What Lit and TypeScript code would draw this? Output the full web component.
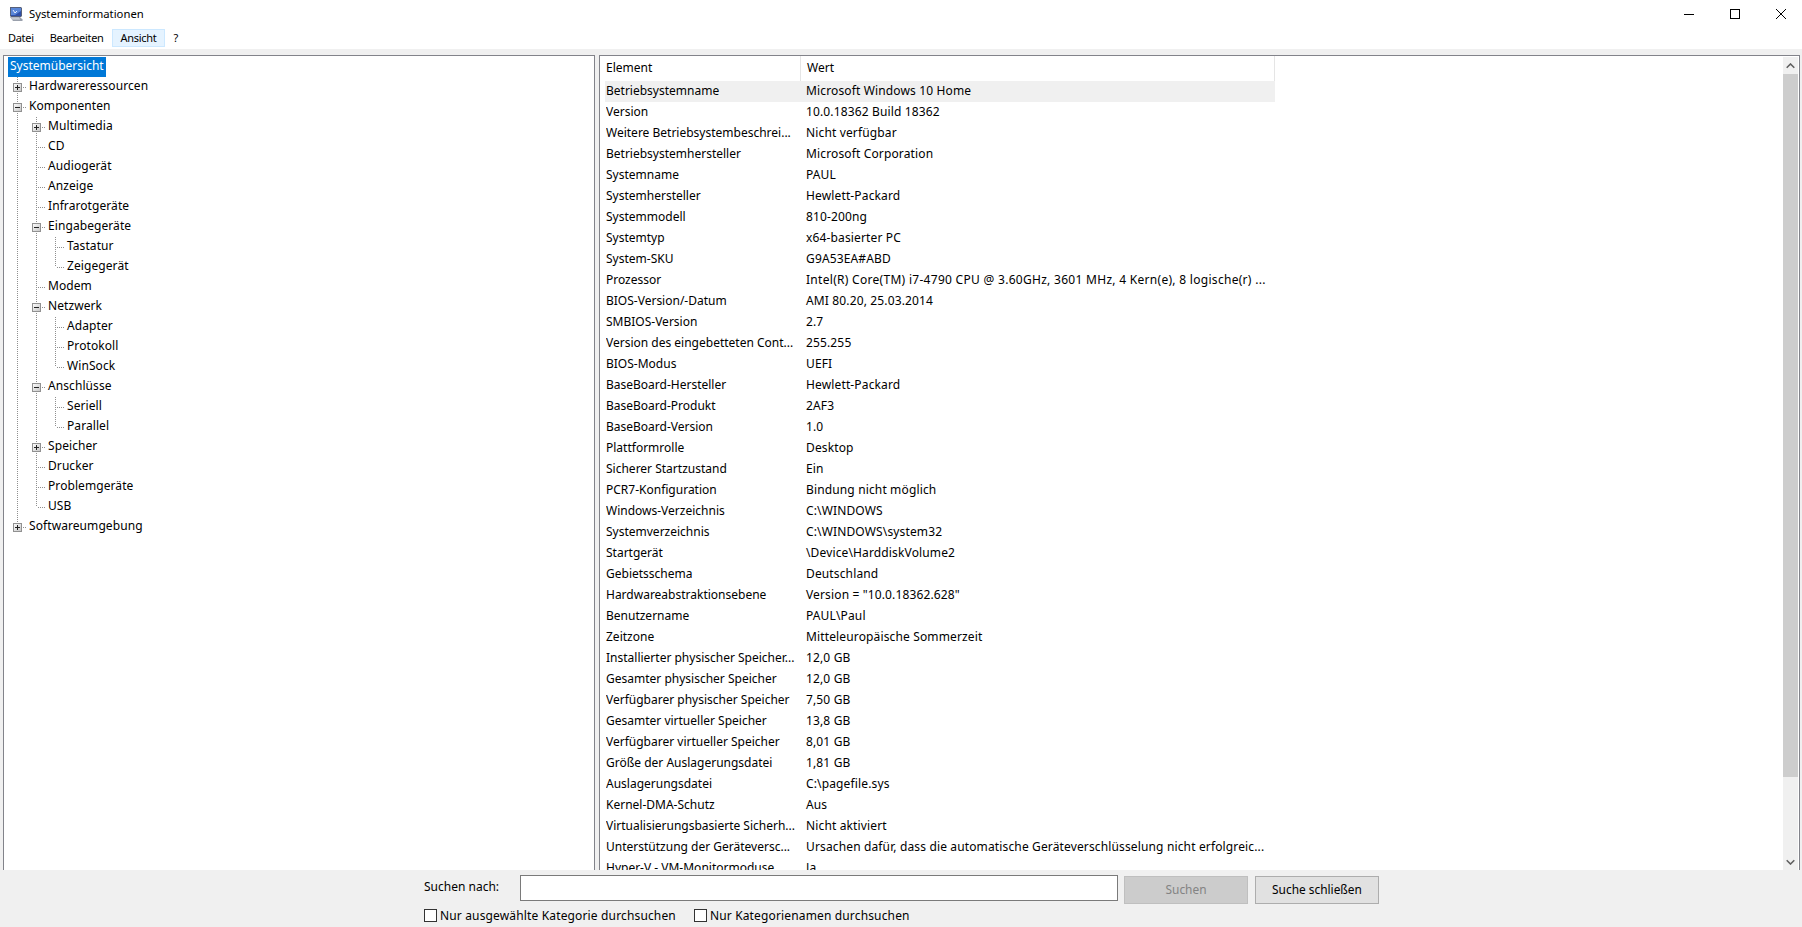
import { LitElement, html, css, svg } from "lit";
import { customElement } from "lit/decorators.js";

type T = [number, string, string];
const TREE: T[] = [
  [0, "", "Systemübersicht"],
  [0, "+", "Hardwareressourcen"],
  [0, "-", "Komponenten"],
  [1, "+", "Multimedia"],
  [1, "", "CD"],
  [1, "", "Audiogerät"],
  [1, "", "Anzeige"],
  [1, "", "Infrarotgeräte"],
  [1, "-", "Eingabegeräte"],
  [2, "", "Tastatur"],
  [2, "", "Zeigegerät"],
  [1, "", "Modem"],
  [1, "-", "Netzwerk"],
  [2, "", "Adapter"],
  [2, "", "Protokoll"],
  [2, "", "WinSock"],
  [1, "-", "Anschlüsse"],
  [2, "", "Seriell"],
  [2, "", "Parallel"],
  [1, "+", "Speicher"],
  [1, "", "Drucker"],
  [1, "", "Problemgeräte"],
  [1, "", "USB"],
  [0, "+", "Softwareumgebung"],
];

const ROWS: [string, string][] = [
  ["Betriebsystemname", "Microsoft Windows 10 Home"],
  ["Version", "10.0.18362 Build 18362"],
  ["Weitere Betriebsystembeschrei...", "Nicht verfügbar"],
  ["Betriebsystemhersteller", "Microsoft Corporation"],
  ["Systemname", "PAUL"],
  ["Systemhersteller", "Hewlett-Packard"],
  ["Systemmodell", "810-200ng"],
  ["Systemtyp", "x64-basierter PC"],
  ["System-SKU", "G9A53EA#ABD"],
  ["Prozessor", "Intel(R) Core(TM) i7-4790 CPU @ 3.60GHz, 3601 MHz, 4 Kern(e), 8 logische(r) ..."],
  ["BIOS-Version/-Datum", "AMI 80.20, 25.03.2014"],
  ["SMBIOS-Version", "2.7"],
  ["Version des eingebetteten Cont...", "255.255"],
  ["BIOS-Modus", "UEFI"],
  ["BaseBoard-Hersteller", "Hewlett-Packard"],
  ["BaseBoard-Produkt", "2AF3"],
  ["BaseBoard-Version", "1.0"],
  ["Plattformrolle", "Desktop"],
  ["Sicherer Startzustand", "Ein"],
  ["PCR7-Konfiguration", "Bindung nicht möglich"],
  ["Windows-Verzeichnis", "C:\\WINDOWS"],
  ["Systemverzeichnis", "C:\\WINDOWS\\system32"],
  ["Startgerät", "\\Device\\HarddiskVolume2"],
  ["Gebietsschema", "Deutschland"],
  ["Hardwareabstraktionsebene", 'Version = "10.0.18362.628"'],
  ["Benutzername", "PAUL\\Paul"],
  ["Zeitzone", "Mitteleuropäische Sommerzeit"],
  ["Installierter physischer Speicher...", "12,0 GB"],
  ["Gesamter physischer Speicher", "12,0 GB"],
  ["Verfügbarer physischer Speicher", "7,50 GB"],
  ["Gesamter virtueller Speicher", "13,8 GB"],
  ["Verfügbarer virtueller Speicher", "8,01 GB"],
  ["Größe der Auslagerungsdatei", "1,81 GB"],
  ["Auslagerungsdatei", "C:\\pagefile.sys"],
  ["Kernel-DMA-Schutz", "Aus"],
  ["Virtualisierungsbasierte Sicherh...", "Nicht aktiviert"],
  ["Unterstützung der Geräteversc...", "Ursachen dafür, dass die automatische Geräteverschlüsselung nicht erfolgreic..."],
  ["Hyper-V - VM-Monitormoduse...", "Ja"],
];

function continues(i: number, level: number): boolean {
  for (let j = i + 1; j < TREE.length; j++) {
    if (TREE[j][0] < level) return false;
    if (TREE[j][0] === level) return true;
  }
  return false;
}

@customElement("app-root")
export class AppRoot extends LitElement {
  static styles = css`
    :host {
      display: flex;
      flex-direction: column;
      width: 1802px;
      height: 927px;
      overflow: hidden;
      background: #fff;
      font: 12px "Noto Sans", "Liberation Sans", sans-serif;
      color: #000;
    }
    .title {
      height: 27px;
      display: flex;
      align-items: center;
      flex: none;
    }
    .appicon { margin: 0 5px 0 8px; flex: none; }
    .ttext { flex: 1; font-size: 11.3px; }
    .wbtn { width: 46px; height: 27px; display: flex; align-items: center; justify-content: center; flex: none; }
    .wbtn:last-child { margin-right: -2px; }
    .menu { height: 20px; display: flex; padding: 2px 0 0 0; flex: none; font-size: 11px; letter-spacing: -.3px; }
    .mi { padding: 0 7px; height: 18px; line-height: 16px; border: 1px solid transparent; box-sizing: border-box; }
    .mi.on { background: #e5f3ff; border-color: #cce8ff; padding: 0 8px; }
    .main {
      flex: 1;
      min-height: 0;
      background: #f0f0f0;
      display: flex;
      gap: 4px;
      padding: 6px 2px 0 3px;
    }
    .pane {
      background: #fff;
      border: 1px solid #82838a;
      box-sizing: border-box;
      overflow: hidden;
      height: 817px;
    }
    .tree { width: 592px; flex: none; padding: 1px 0 0 4px; }
    .node { display: flex; height: 20px; align-items: stretch; }
    .g { width: 19px; flex: none; position: relative; }
    .line-v, .line-h { position: absolute; display: block; }
    .line-v {
      left: 9px; top: 0; bottom: 0; width: 1px;
      background: repeating-linear-gradient(to bottom, #8f8f8f 0 1px, transparent 1px 2px);
    }
    .line-v.half { bottom: 50%; }
    .line-h {
      left: 10px; top: 10px; width: 9px; height: 1px;
      background: repeating-linear-gradient(to right, transparent 0 1px, #8f8f8f 1px 2px);
    }
    .box { position: absolute; left: 5px; top: 6px; }
    .label { height: 20px; line-height: 18px; padding: 0 2px; white-space: nowrap; letter-spacing: .08px; }
    .label.sel { background: #0078d7; color: #fff; letter-spacing: 0; }
    .list { flex: 1; min-width: 0; display: flex; }
    .listbody { flex: 1; min-width: 0; padding-left: 5px; overflow: hidden; }
    .head { display: flex; height: 25px; width: 670px; }
    .hc { line-height: 24px; padding-left: 1px; box-sizing: border-box; border-right: 1px solid #e5e5e5; }
    .c1 { width: 196px; flex: none; white-space: nowrap; overflow: hidden; }
    .c2 { flex: 1; white-space: nowrap; padding-left: 4px; letter-spacing: .14px; }
    .c2.wide { letter-spacing: .29px; }
    .row { display: flex; height: 21px; line-height: 19px; width: 670px; padding-left: 1px; box-sizing: border-box; }
    .row.hl { background: #f0f0f0; }
    .hc.c1 { width: 196px; }
    .hc.c2 { padding-left: 6px; letter-spacing: 0; }
    .sb { width: 15px; flex: none; background: #f0f0f0; display: flex; flex-direction: column; margin: 1px 1px 1px 0; }
    .sbb { height: 17px; flex: none; display: flex; align-items: center; justify-content: center; }
    .thumb { height: 703px; background: #cdcdcd; flex: none; }
    .sp { flex: 1; }
    .bottom {
      background: #f0f0f0;
      flex: none;
      height: 57px;
      box-sizing: border-box;
      padding: 5px 0 0 424px;
      display: grid;
      grid-template-rows: 29px 23px;
    }
    .line1 { display: flex; align-items: flex-start; }
    .sl { width: 96px; line-height: 23px; flex: none; }
    .input { width: 598px; height: 26px; box-sizing: border-box; background: #fff; border: 1px solid #7a7a7a; flex: none; }
    .btn {
      width: 124px; height: 28px; box-sizing: border-box; margin-left: 6px; margin-top: 1px;
      border: 1px solid #adadad; background: #e1e1e1; text-align: center; line-height: 25px; flex: none;
      font-size: 11.9px;
    }
    .btn.off { background: #cccccc; border-color: #bfbfbf; color: #838383; margin-right: 1px; }
    .line2 { display: flex; align-items: center; letter-spacing: .15px; }
    .chk { display: flex; align-items: center; margin-right: 18px; }
    .cb { width: 13px; height: 13px; box-sizing: border-box; background: #fff; border: 1px solid #333; margin-right: 3px; flex: none; }
  `;

  private expander(kind: string) {
    return html`<svg class="box" width="9" height="9" viewBox="0 0 9 9">
      <defs><linearGradient id="e" x1="0" y1="0" x2="1" y2="1"><stop offset="0" stop-color="#fff"/><stop offset="1" stop-color="#c4c4c4"/></linearGradient></defs>
      <rect x=".5" y=".5" width="8" height="8" fill="url(#e)" stroke="#919191"/>
      ${svg`<path d="M2 4.5h5" stroke="#222" />`}
      ${kind === "+" ? svg`<path d="M4.5 2v5" stroke="#222" />` : ""}
    </svg>`;
  }

  private node(t: T, i: number) {
    const [level, kind, text] = t;
    if (i === 0) {
      return html`<div class="node"><span class="label sel">${text}</span></div>`;
    }
    const cells = [];
    for (let k = 0; k < level; k++) {
      const on = continues(i, k);
      cells.push(html`<span class="g">${on ? html`<i class="line-v"></i>` : ""}</span>`);
    }
    const more = continues(i, level);
    cells.push(html`<span class="g">
      <i class="line-v ${more ? "" : "half"}"></i><i class="line-h"></i>
      ${kind ? this.expander(kind) : ""}
    </span>`);
    return html`<div class="node">${cells}<span class="label">${text}</span></div>`;
  }

  render() {
    return html`
      <div class="title">
        <svg class="appicon" width="16" height="16" viewBox="0 0 16 16">
          <path d="M2 1h11l1 1v8l-1 1H3l-1-1z" fill="#56607a"/>
          <rect x="3" y="2" width="10" height="8" fill="#2f4fa8"/>
          <path d="M3 2h10v3L7 9H3z" fill="#5a86d8"/>
          <path d="M5 4l2 3 2-2" stroke="#e4ecfb" fill="none"/>
          <path d="M2 11h10l3 3-1 1H5z" fill="#9aa0ac"/>
          <path d="M3 12h8M4 13h8" stroke="#d3d6dc"/>
        </svg>
        <span class="ttext">Systeminformationen</span>
        <span class="wbtn"><svg width="10" height="10"><path d="M0 5.5h10" stroke="#000"/></svg></span>
        <span class="wbtn"><svg width="10" height="10"><rect x=".5" y=".5" width="9" height="9" fill="none" stroke="#000"/></svg></span>
        <span class="wbtn"><svg width="10" height="10"><path d="M0 0l10 10M10 0L0 10" stroke="#000"/></svg></span>
      </div>
      <div class="menu">
        <span class="mi">Datei</span><span class="mi">Bearbeiten</span><span class="mi on">Ansicht</span><span class="mi">?</span>
      </div>
      <div class="main">
        <div class="pane tree">${TREE.map((t, i) => this.node(t, i))}</div>
        <div class="pane list">
          <div class="listbody">
            <div class="head"><div class="hc c1">Element</div><div class="hc c2">Wert</div></div>
            ${ROWS.map((r, i) => html`<div class="row ${i === 0 ? "hl" : ""}"><div class="c1">${r[0]}</div><div class="c2 ${r[0] === "Prozessor" ? "wide" : ""}">${r[1]}</div></div>`)}
          </div>
          <div class="sb">
            <div class="sbb"><svg width="9" height="6"><path d="M.7 4.8L4.5 1l3.8 3.8" fill="none" stroke="#606060" stroke-width="1.6"/></svg></div>
            <div class="thumb"></div>
            <div class="sp"></div>
            <div class="sbb"><svg width="9" height="6"><path d="M.7 1.2L4.5 5l3.8-3.8" fill="none" stroke="#606060" stroke-width="1.6"/></svg></div>
          </div>
        </div>
      </div>
      <div class="bottom">
        <div class="line1">
          <span class="sl">Suchen nach:</span>
          <span class="input"></span>
          <span class="btn off">Suchen</span>
          <span class="btn">Suche schließen</span>
        </div>
        <div class="line2">
          <label class="chk"><span class="cb"></span>Nur ausgewählte Kategorie durchsuchen</label>
          <label class="chk"><span class="cb"></span>Nur Kategorienamen durchsuchen</label>
        </div>
      </div>
    `;
  }
}
